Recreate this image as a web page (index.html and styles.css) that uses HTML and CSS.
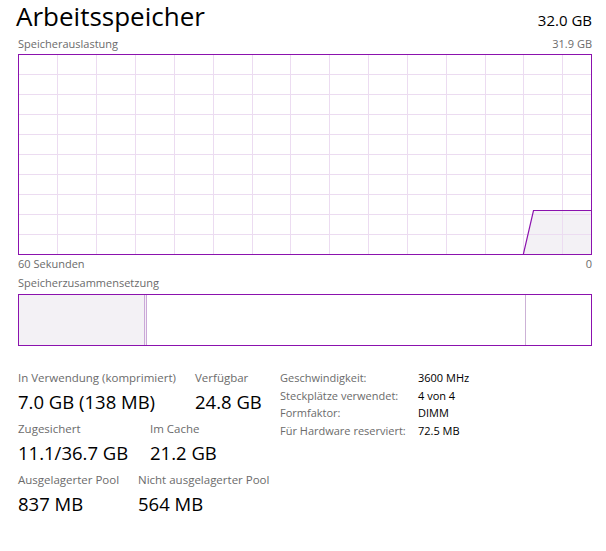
FILE: index.html
```html
<!DOCTYPE html>
<html lang="de">
<head>
<meta charset="utf-8">
<title>Arbeitsspeicher</title>
<link rel="stylesheet" href="styles.css">
</head>
<body>
<div class="page">
  <header class="head">
    <h1 class="title">Arbeitsspeicher</h1>
    <span class="total">32.0 GB</span>
  </header>

  <div class="caprow caprow-top">
    <span>Speicherauslastung</span>
    <span>31.9 GB</span>
  </div>

  <div class="graph">
    <svg class="graph-svg" width="572" height="199" viewBox="0 0 572 199" xmlns="http://www.w3.org/2000/svg">
      <polygon points="504.3,199 514.5,155.5 572,155.5 572,199" fill="#f3f1f5"/>
      <g stroke="#ecdcf1" stroke-width="1" fill="none">
        <line x1="0" y1="19.5" x2="572" y2="19.5"/>
        <line x1="0" y1="39.5" x2="572" y2="39.5"/>
        <line x1="0" y1="59.5" x2="572" y2="59.5"/>
        <line x1="0" y1="79.5" x2="572" y2="79.5"/>
        <line x1="0" y1="99.5" x2="572" y2="99.5"/>
        <line x1="0" y1="119.5" x2="572" y2="119.5"/>
        <line x1="0" y1="139.5" x2="572" y2="139.5"/>
        <line x1="0" y1="159.5" x2="572" y2="159.5"/>
        <line x1="0" y1="179.5" x2="572" y2="179.5"/>
        <line x1="38.5" y1="0" x2="38.5" y2="199"/>
        <line x1="77.5" y1="0" x2="77.5" y2="199"/>
        <line x1="116.5" y1="0" x2="116.5" y2="199"/>
        <line x1="155.5" y1="0" x2="155.5" y2="199"/>
        <line x1="194.5" y1="0" x2="194.5" y2="199"/>
        <line x1="233.5" y1="0" x2="233.5" y2="199"/>
        <line x1="271.5" y1="0" x2="271.5" y2="199"/>
        <line x1="310.5" y1="0" x2="310.5" y2="199"/>
        <line x1="349.5" y1="0" x2="349.5" y2="199"/>
        <line x1="388.5" y1="0" x2="388.5" y2="199"/>
        <line x1="427.5" y1="0" x2="427.5" y2="199"/>
        <line x1="466.5" y1="0" x2="466.5" y2="199"/>
        <line x1="504.5" y1="0" x2="504.5" y2="199"/>
        <line x1="543.5" y1="0" x2="543.5" y2="199"/>
      </g>
      <polyline points="504.3,199.5 514.5,155.5 572,155.5" fill="none" stroke="#8b12ae" stroke-width="1.2"/>
    </svg>
  </div>

  <div class="caprow caprow-axis">
    <span>60 Sekunden</span>
    <span>0</span>
  </div>

  <div class="caption">Speicherzusammensetzung</div>

  <div class="comp">
    <div class="seg seg-use"></div>
    <div class="seg seg-mod"></div>
    <div class="seg seg-standby"></div>
    <div class="seg seg-free"></div>
  </div>

  <section class="stats">
    <div class="stats-left">
      <div class="stat-row">
        <div class="stat stat-w1">
          <div class="label">In Verwendung (komprimiert)</div>
          <div class="value">7.0 GB (138 MB)</div>
        </div>
        <div class="stat">
          <div class="label">Verfügbar</div>
          <div class="value">24.8 GB</div>
        </div>
      </div>
      <div class="stat-row">
        <div class="stat stat-w2">
          <div class="label">Zugesichert</div>
          <div class="value">11.1/36.7 GB</div>
        </div>
        <div class="stat">
          <div class="label">Im Cache</div>
          <div class="value">21.2 GB</div>
        </div>
      </div>
      <div class="stat-row">
        <div class="stat stat-w3">
          <div class="label">Ausgelagerter Pool</div>
          <div class="value">837 MB</div>
        </div>
        <div class="stat">
          <div class="label">Nicht ausgelagerter Pool</div>
          <div class="value">564 MB</div>
        </div>
      </div>
    </div>

    <dl class="props">
      <dt>Geschwindigkeit:</dt><dd>3600 MHz</dd>
      <dt>Steckplätze verwendet:</dt><dd>4 von 4</dd>
      <dt>Formfaktor:</dt><dd>DIMM</dd>
      <dt>Für Hardware reserviert:</dt><dd>72.5 MB</dd>
    </dl>
  </section>
</div>
</body>
</html>
```

FILE: styles.css
```css
html, body {
  margin: 0;
  padding: 0;
  background: #ffffff;
}

body {
  font-family: "Open Sans", "Noto Sans", "Liberation Sans", sans-serif;
  color: #000000;
}

.page {
  width: 574px;
  padding: 0 14px 0 18px;
  display: flex;
  flex-direction: column;
}

.head {
  display: flex;
  align-items: baseline;
  justify-content: space-between;
  height: 36px;
}

.title {
  margin: 0 0 0 -2px;
  font-size: 26px;
  line-height: 32px;
  font-weight: 400;
  color: #000;
}

.total {
  font-size: 15px;
  line-height: 20px;
  color: #000;
}

.caprow {
  display: flex;
  justify-content: space-between;
  font-size: 11px;
  line-height: 16px;
  color: #6b6b6b;
}

.caprow-top {
  margin-bottom: 2px;
}

.caprow-axis {
  margin-top: 1px;
}

.caption {
  margin-top: 3px;
  font-size: 11px;
  line-height: 16px;
  color: #6b6b6b;
}

.graph {
  border: 1px solid #8b12ae;
  height: 199px;
}

.graph-svg {
  display: block;
}

.comp {
  margin-top: 3px;
  height: 50px;
  border: 1px solid #8b12ae;
  display: flex;
}

.seg-use {
  width: 125px;
  background: #f3f1f5;
  border-right: 1px solid #cba8d8;
}

.seg-mod {
  width: 1px;
  background: #f3f1f5;
  border-right: 1px solid #cba8d8;
}

.seg-standby {
  width: 378px;
  border-right: 1px solid #ccb2d6;
}

.seg-free {
  flex: 1;
}

.stats {
  margin-top: 24px;
  display: flex;
  align-items: flex-start;
}

.stats-left {
  width: 262px;
  display: flex;
  flex-direction: column;
  gap: 7px;
}

.stat-row {
  display: flex;
}

.stat-w1 {
  width: 177px;
}

.stat-w2 {
  width: 132px;
}

.stat-w3 {
  width: 120px;
}

.label {
  font-size: 11.5px;
  line-height: 16px;
  color: #6b6b6b;
  white-space: nowrap;
}

.value {
  margin-top: 3px;
  font-size: 18.5px;
  line-height: 25px;
  color: #000;
  white-space: nowrap;
}

.props {
  margin: -1px 0 0 0;
  display: grid;
  grid-template-columns: 138px auto;
  align-content: start;
  font-size: 11px;
  line-height: 17.6px;
}

.props dt {
  color: #6b6b6b;
}

.props dd {
  margin: 0;
  color: #000;
}
```
